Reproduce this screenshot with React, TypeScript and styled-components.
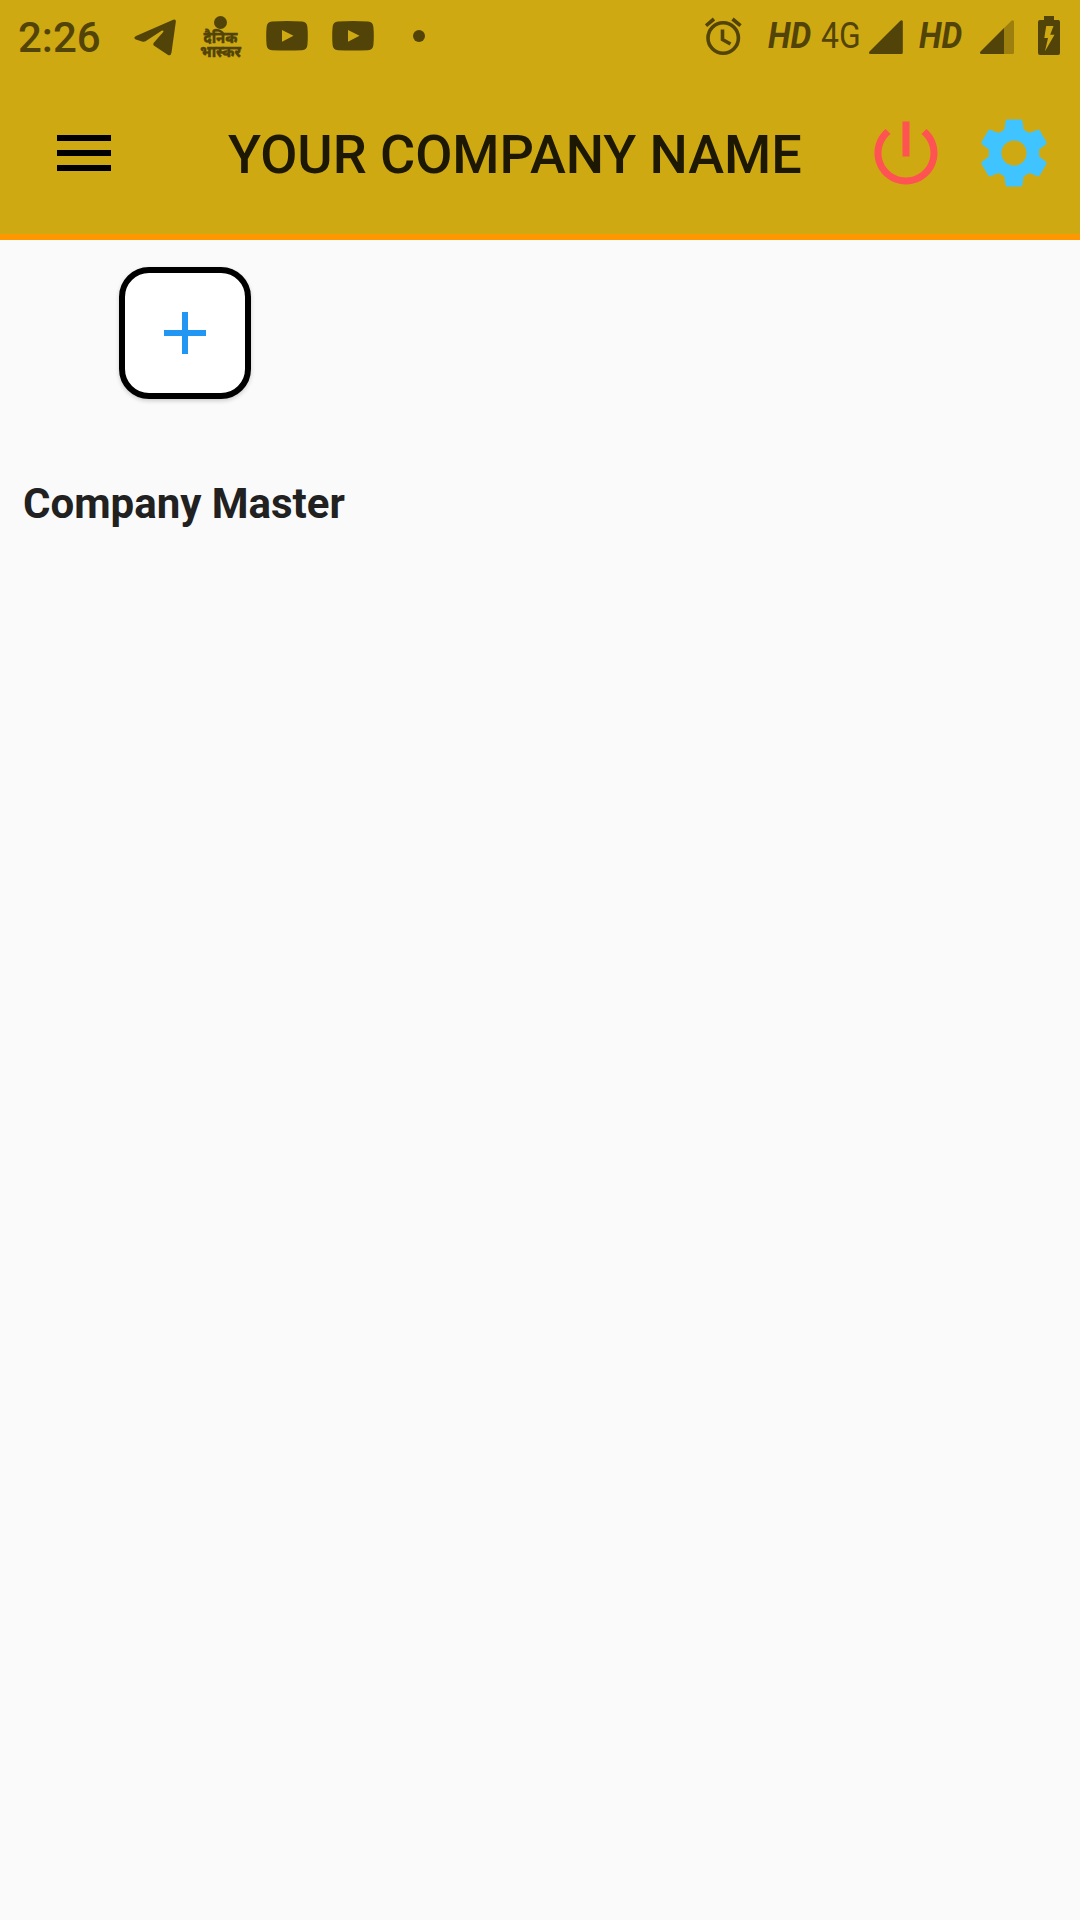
import React from "react";
import styled, { createGlobalStyle } from "styled-components";

const ink = "#524408";

const GlobalStyle = createGlobalStyle`
  body { margin: 0; background: #fafafa; font-family: Roboto, "Noto Sans", sans-serif; }
`;
const Screen = styled.div`
  width: 1080px;
  height: 1920px;
  background: #fafafa;
  overflow: hidden;
`;
const Header = styled.header`
  background: #cfa911;
  border-bottom: 6px solid #ff9800;
`;
const StatusBar = styled.div`
  height: 72px;
  display: flex;
  justify-content: space-between;
  padding: 0 20px 0 18px;
  color: ${ink};
`;
const Group = styled.div`
  display: flex;
  height: 72px;
`;
const Clock = styled.span`
  width: 114px;
  font-size: 42px;
  font-weight: 500;
  line-height: 49px;
  padding-top: 13px;
`;
const Glyph = styled.svg<{ $w: number; $gap?: number }>`
  display: block;
  flex: none;
  width: ${(p) => p.$w}px;
  height: 72px;
  margin-right: ${(p) => p.$gap ?? 0}px;
`;
const Bhaskar = styled.div`
  width: 44px;
  margin-right: 23px;
  display: flex;
  flex-direction: column;
  align-items: center;
  padding: 16px 1px 0 0;
  box-sizing: border-box;
  font-family: "Noto Sans Devanagari", "Noto Sans", sans-serif;
  font-weight: 900;
`;
const Sun = styled.i`
  width: 13px;
  height: 13px;
  border-radius: 50%;
  background: ${ink};
  margin-bottom: 4px;
`;
const Hindi = styled.span`
  font-size: 14px;
  line-height: 11.5px;
  text-align: center;
  white-space: nowrap;
  -webkit-text-stroke: 0.25px ${ink};
  transform: scaleY(1.16);
  transform-origin: top;
`;
const Network = styled.span<{ $w: number; $gap: number; $bold?: boolean; $squeeze: number }>`
  width: ${(p) => p.$w}px;
  margin-right: ${(p) => p.$gap}px;
  padding-top: 15px;
  font-size: 37px;
  line-height: 42px;
  font-weight: ${(p) => (p.$bold ? 700 : 400)};
  font-style: ${(p) => (p.$bold ? "italic" : "normal")};
  transform: scaleX(${(p) => p.$squeeze});
  transform-origin: left;
`;
const AppBar = styled.div`
  height: 162px;
  display: flex;
  align-items: center;
  padding: 0 24px 0 48px;
`;
const Title = styled.h1`
  flex: 1;
  margin: 0 0 0 108px;
  padding-top: 3px;
  font-size: 54px;
  line-height: 64px;
  font-weight: 500;
  letter-spacing: -0.04px;
  color: #1c1803;
  white-space: nowrap;
`;
const IconButton = styled.button<{ $size: number; $color: string; $gap?: number }>`
  border: 0;
  padding: 0;
  background: none;
  flex: none;
  width: ${(p) => p.$size}px;
  height: ${(p) => p.$size}px;
  margin-right: ${(p) => p.$gap ?? 0}px;
  color: ${(p) => p.$color};
  svg { display: block; width: 100%; height: 100%; fill: currentColor; }
`;
const Main = styled.main`
  display: flex;
  flex-direction: column;
  align-items: flex-start;
  padding: 27px 23px;
`;
const AddCard = styled.button`
  box-sizing: border-box;
  width: 132px;
  height: 132px;
  margin: 0 0 80px 96px;
  padding: 0;
  display: grid;
  place-items: center;
  background: #fff;
  border: 6px solid #000;
  border-radius: 30px;
  box-shadow: 0 2px 4px rgba(0, 0, 0, 0.18);
  color: #2196f3;
  svg { width: 72px; height: 72px; fill: currentColor; }
`;
const Label = styled.h2`
  margin: 0;
  font-size: 42px;
  line-height: 49px;
  font-weight: 700;
  color: #212121;
`;

const YouTube = ({ gap }: { gap: number }) => (
  <Glyph $w={42} $gap={gap} viewBox="0 0 42 72">
    <path
      fill={ink}
      fillRule="evenodd"
      d="M6 21.6Q21 20.4 36 21.6Q41 22 41.4 27Q42.2 36 41.4 45Q41 50 36 50.2Q21 51 6 50.2Q1 50 .6 45Q-.2 36 .6 27Q1 22 6 21.6ZM16 30V41.7L27.5 35.8Z"
    />
  </Glyph>
);

export default function App() {
  return (
    <Screen>
      <GlobalStyle />
      <Header>
        <StatusBar>
          <Group>
            <Clock>2:26</Clock>
            <Glyph $w={44} $gap={23} viewBox="132 0 44 72">
              <path
                fill={ink}
                d="M173.2 19.8Q176.2 18.8 175.8 22L171.5 52.5Q170.8 56.8 167.3 54.4L154.5 46Q152.3 44.6 154 42.6L163 32.3Q164.3 30.4 162 30.5L145.5 41.2Q144 42 142 41.4L135.8 39.4Q132.8 38 136 36Z"
              />
            </Glyph>
            <Bhaskar>
              <Sun />
              <Hindi>
                दैनिक
                <br />
                भास्कर
              </Hindi>
            </Bhaskar>
            <YouTube gap={24} />
            <YouTube gap={39} />
            <Glyph $w={12} viewBox="0 0 12 72">
              <circle cx="6" cy="36" r="6" fill={ink} />
            </Glyph>
          </Group>
          <Group>
            <Glyph $w={38} $gap={25} viewBox="705.5 0 38 72">
              <g fill="none" stroke={ink} strokeWidth="3.6">
                <circle cx="723.7" cy="38" r="15.2" />
                <path d="M723 29.5V39.5L731 44M706.5 25.7L714.5 19M741 25.7L733 19" />
              </g>
            </Glyph>
            <Network $w={43} $gap={10} $bold $squeeze={0.89}>HD</Network>
            <Network $w={37} $gap={11} $squeeze={0.86}>4G</Network>
            <Glyph $w={34} $gap={16} viewBox="869 0 34 72">
              <path fill={ink} d="M902.8 21.5V52.5Q902.8 54 901.3 54H870.5Q868 53.6 869.5 51.6L900.3 20.7Q902.2 19.4 902.8 21.5Z" />
            </Glyph>
            <Network $w={43} $gap={18} $bold $squeeze={0.89}>HD</Network>
            <Glyph $w={34} $gap={24} viewBox="980 0 34 72">
              <path fill="#9c7f0d" d="M1004 28L1011.5 20.7Q1013.4 19.4 1014 21.5V52.5Q1014 54 1012.5 54H1004Z" />
              <path fill={ink} d="M1004 28V54H981.5Q979 53.6 980.5 51.6Z" />
            </Glyph>
            <Glyph $w={22} viewBox="1038 0 22 72">
              <path
                fill={ink}
                fillRule="evenodd"
                d="M1044 16H1054V20H1058.3Q1060 20 1060 22V53Q1060 55 1058 55H1040Q1038 55 1038 53V22Q1038 20 1040 20H1044ZM1046.2 26L1044.3 38H1048L1045 51.3L1054.5 34.7H1050.2L1053.5 26Z"
              />
            </Glyph>
          </Group>
        </StatusBar>
        <AppBar>
          <IconButton $size={72} $color="#000" aria-label="Menu">
            <svg viewBox="0 0 24 24"><path d="M3 18h18v-2H3v2zm0-5h18v-2H3v2zm0-7v2h18V6H3z" /></svg>
          </IconButton>
          <Title>YOUR COMPANY NAME</Title>
          <IconButton $size={84} $color="#ff5252" $gap={24} aria-label="Power">
            <svg viewBox="0 0 24 24"><path d="M13 3h-2v10h2V3zm4.83 2.17l-1.42 1.42C17.99 7.86 19 9.81 19 12c0 3.87-3.13 7-7 7s-7-3.13-7-7c0-2.19 1.01-4.14 2.58-5.42L6.17 5.17C4.23 6.82 3 9.26 3 12c0 4.97 4.03 9 9 9s9-4.03 9-9c0-2.74-1.23-5.18-3.17-6.83z" /></svg>
          </IconButton>
          <IconButton $size={84} $color="#40c4ff" aria-label="Settings">
            <svg viewBox="0 0 24 24"><path d="M19.14 12.94c.04-.3.06-.61.06-.94 0-.32-.02-.64-.07-.94l2.03-1.58c.18-.14.23-.41.12-.61l-1.92-3.32c-.12-.22-.37-.29-.59-.22l-2.39.96c-.5-.38-1.03-.7-1.62-.94l-.36-2.54c-.04-.24-.24-.41-.48-.41h-3.84c-.24 0-.43.17-.47.41l-.36 2.54c-.59.24-1.13.57-1.62.94l-2.39-.96c-.22-.08-.47 0-.59.22L2.74 8.87c-.12.21-.08.47.12.61l2.03 1.58c-.05.3-.09.63-.09.94s.02.64.07.94l-2.03 1.58c-.18.14-.23.41-.12.61l1.92 3.32c.12.22.37.29.59.22l2.39-.96c.5.38 1.03.7 1.62.94l.36 2.54c.05.24.24.41.48.41h3.84c.24 0 .44-.17.47-.41l.36-2.54c.59-.24 1.13-.56 1.62-.94l2.39.96c.22.08.47 0 .59-.22l1.92-3.32c.12-.22.07-.47-.12-.61l-2.01-1.58zM12 15.6c-1.98 0-3.6-1.62-3.6-3.6s1.62-3.6 3.6-3.6 3.6 1.62 3.6 3.6-1.62 3.6-3.6 3.6z" /></svg>
          </IconButton>
        </AppBar>
      </Header>
      <Main>
        <AddCard aria-label="Add company">
          <svg viewBox="0 0 24 24"><path d="M19 13h-6v6h-2v-6H5v-2h6V5h2v6h6v2z" /></svg>
        </AddCard>
        <Label>Company Master</Label>
      </Main>
    </Screen>
  );
}
